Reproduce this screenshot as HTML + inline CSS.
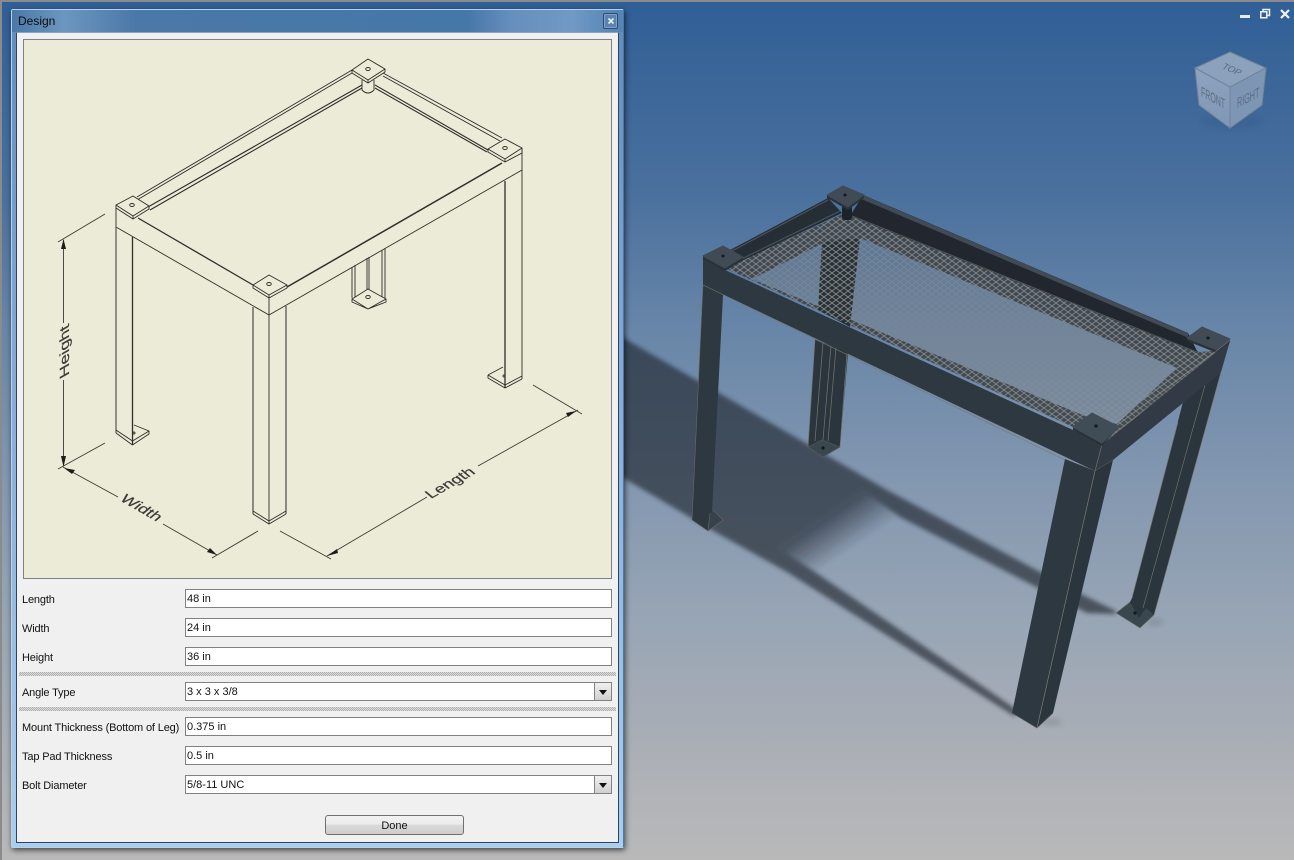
<!DOCTYPE html>
<html><head><meta charset="utf-8"><title>Design</title>
<style>
html,body{margin:0;padding:0;width:1294px;height:860px;overflow:hidden;background:#888}
body{position:relative;font-family:"Liberation Sans",sans-serif}
.abs,svg,.win,.c,.lab,.inp,.hatch,.btn,.dd{position:absolute}
#bg{left:0;top:0;width:1294px;height:860px;background:linear-gradient(180deg,#2f5f97 0,#3a6598 70px,#4b719e 200px,#6886a8 330px,#8397b0 480px,#98a5b5 620px,#a9aeb6 740px,#b9b9b9 860px)}
#edgeT{position:absolute;left:0;top:0;width:1294px;height:2px;background:#8b8b8b}
#edgeL{position:absolute;left:0;top:0;width:2px;height:860px;background:#8b8b8b}
.win{left:11px;top:9px;width:613px;height:839px;box-sizing:border-box;border:1px solid #b9d2ea;border-right-color:#4d78a6;background:linear-gradient(180deg,#5f8cbc 0,#7ea6d2 300px,#a8cef0 839px);box-shadow:1px 2px 6px rgba(0,0,0,.65);border-radius:2px}
.tb{position:absolute;left:0;top:0;right:0;height:22px;background:linear-gradient(90deg,#4a79a8 0,#6b96bf 52px,#4a78a8 125px,#4677a9 455px,#668fbd 500px,#7199c5 560px,#5585b6 605px)}
.ttl{position:absolute;left:6px;top:3px;font-size:12px;color:#0c0c0c;line-height:17px}
.x{position:absolute;left:591px;top:3px;width:13px;height:14px;border:1px solid #2f4a6e;border-radius:2px;background:#5b83b0;box-shadow:inset 0 0 0 1px #7fa3cc}
.c{left:16px;top:32px;width:603px;height:811px;box-sizing:border-box;border:1px solid #34415a;border-top-color:#8da4bd;background:#f0f0f0}
.prev{left:23px;top:39px;width:589px;height:540px;box-sizing:border-box;border:1px solid #7b8090;background:#ecebd7;position:absolute}
.lab{left:22px;font-size:11px;line-height:14px;color:#111;white-space:nowrap;letter-spacing:-.15px}
.inp{left:185px;width:427px;height:19px;box-sizing:border-box;border:1px solid #7f8285;background:#fff;font-size:11px;line-height:19px;padding-left:1px;color:#111;white-space:nowrap}
.hatch{left:19px;width:597px;height:4px;background:repeating-conic-gradient(#b0b0b0 0 25%,#dadada 0 50%) 0 0/2px 2px}
.dd{left:594px;width:18px;height:19px;box-sizing:border-box;border:1px solid #7f8285;background:linear-gradient(180deg,#f0f0f0,#cfcfcf)}
.dd i{position:absolute;left:4px;top:7px;width:0;height:0;border-left:4px solid transparent;border-right:4px solid transparent;border-top:5px solid #111}
.btn{left:325px;top:815px;width:139px;height:20px;box-sizing:border-box;border:1px solid #707070;border-radius:3px;background:linear-gradient(180deg,#f3f3f3 0,#ebebeb 45%,#dadada 50%,#cdcdcd 100%);font-size:11px;line-height:20px;text-align:center;color:#111}
</style></head><body>
<div id="bg" class="abs"></div><div id="edgeT"></div><div id="edgeL"></div>

<svg style="left:0;top:0" width="1294" height="860" viewBox="0 0 1294 860">
<defs>
<filter id="b1" filterUnits="userSpaceOnUse" x="600" y="300" width="600" height="460"><feGaussianBlur stdDeviation="2"/></filter>
<filter id="b2" x="-30%" y="-30%" width="160%" height="160%"><feGaussianBlur stdDeviation="3"/></filter>
<filter id="soft" filterUnits="userSpaceOnUse" x="680" y="170" width="570" height="570"><feGaussianBlur stdDeviation=".35"/></filter>
<linearGradient id="fade" gradientUnits="userSpaceOnUse" x1="820" y1="519" x2="844" y2="554"><stop offset="0" stop-color="#1a2029"/><stop offset=".25" stop-color="#1a2029" stop-opacity=".8"/><stop offset="1" stop-color="#1a2029" stop-opacity="0"/></linearGradient>
<pattern id="mesh" patternUnits="userSpaceOnUse" width="8" height="6">
<path d="M0 3L4 0L8 3L4 6Z" fill="none" stroke="#85837f" stroke-width=".95"/>
</pattern>
<linearGradient id="cube" x1="0" y1="0" x2="0" y2="1"><stop offset="0" stop-color="#8ea4bf"/><stop offset="1" stop-color="#7e97b5"/></linearGradient>
</defs>

<!-- shadow -->
<g filter="url(#b1)" opacity=".62">
<polygon fill="#1a2029" points="620,336 887,490 1085,596 1116,611 1116,614 1087,613 900,517 862,490 778,548 815,572 988,690 1020,712 1014,716 787,572 717,533 620,476"/>
<polygon fill="url(#fade)" points="862,490 900,517 815,572 778,548"/>
</g>
<ellipse cx="1052" cy="722" rx="10" ry="4" fill="#333" opacity=".15" filter="url(#b2)"/>
<ellipse cx="1155" cy="622" rx="8" ry="4" fill="#333" opacity=".15" filter="url(#b2)"/>

<g filter="url(#soft)">
<!-- back leg -->
<polygon points="815,339 848,353 840,447 823,457 808,447" fill="#2c353d"/>
<g stroke="#76766c" stroke-width=".7" fill="none">
<path d="M815,339L808,447M823,343L815,441M831,346L823,440M836,348L828,441M847,353L840,447"/>
</g>
<polygon points="808,447 823,457 840,447 822,440" fill="#3a4650" stroke="#5b5c56" stroke-width=".6"/>
<circle cx="823" cy="448" r="1.600" fill="#15191d"/>

<!-- left leg -->
<polygon points="703,283 723,295 712,512 723,520 708,531 692,520" fill="#2d3740"/>
<polygon points="708,531 723,520 715,511 711,512 708,525" fill="#36424c"/>
<path d="M703,285L692,520L708,531L723,520L714,511M708,531L710,513" fill="none" stroke="#6b6a60" stroke-width=".6"/>

<!-- right leg -->
<polygon points="1183,402 1221,372 1154,615 1140,628 1116,613 1130,602 1132,598" fill="#2c363e"/>
<polygon points="1116,613 1140,628 1154,615 1146,608 1139,618 1130,602" fill="#3a4650"/>
<circle cx="1135" cy="613" r="1.600" fill="#15191d"/>
<path d="M1205,385L1143,608M1178,422L1132,598M1221,372L1154,615L1140,628L1116,613L1130,602" fill="none" stroke="#77766c" stroke-width=".6"/>

<!-- mesh -->
<path fill-rule="evenodd" fill="#3a444f" fill-opacity=".92" d="M725,268L845,213L1200,352L1222,350L1102,445L1073,427ZM752,279L823,243L860,238L1177,368L1117,424L1085,416Z"/>
<polygon points="822,242 860,238 850,327 818,310" fill="#28313a"/>
<path d="M725,268L845,213L1200,352L1222,350L1102,445L1073,427Z" fill="url(#mesh)"/>

<!-- rear rails -->
<polygon points="730,250 828,198 842,213 727,268" fill="#262d34"/>
<path d="M730,252L828,200M727,266L840,211" stroke="#4b545b" stroke-width="1.100" fill="none"/>
<polygon points="863,195 1188,333 1198,353 850,216" fill="#20272d"/>
<path d="M863,197.500L1188,335.500" stroke="#414c55" stroke-width="4" fill="none"/>
<path d="M852,216L1197,352" stroke="#59605f" stroke-width=".8" fill="none"/>
<rect x="842" y="205" width="10" height="15" rx="3" fill="#1d2329"/>

<!-- plates back -->
<polygon points="827,195 843,186 864,195 864,198 848,210 827,198" fill="#2a3239"/>
<polygon points="827,195 843,186 864,195 848,207" fill="#3f4b55" stroke="#3f4b55" stroke-linejoin="round"/>
<circle cx="845" cy="195" r="1.500" fill="#12161a"/>
<polygon points="1187,338 1202,327 1230,339 1230,342 1217,353 1187,341" fill="#2a3239"/>
<polygon points="1187,338 1202,327 1230,339 1217,350" fill="#3f4b55" stroke="#3f4b55" stroke-linejoin="round"/>
<circle cx="1208" cy="338" r="1.500" fill="#12161a"/>

<!-- front rails -->
<polygon points="703,258 725,270 1073,430 1102,445 1095,471 703,285" fill="#2e3841"/>
<polygon points="1102,445 1230,341 1221,372 1113,460 1095,471" fill="#303b45"/>
<path d="M703,285L1063,459L1095,471L1113,460M1102,444L1095,471M1103,443L1230,340" fill="none" stroke="#79786c" stroke-width=".6"/>

<!-- front leg -->
<polygon points="1065,459 1095,471 1037,728 1012,713" fill="#2d3841"/>
<polygon points="1095,471 1113,460 1053,713 1037,728" fill="#2a343d"/>
<path d="M1095,471L1037,728" stroke="#7d7c70" stroke-width=".7"/>
<path d="M1012,713L1037,728L1053,713" stroke="#5e5e56" stroke-width=".7" fill="none"/>

<!-- plates front -->
<polygon points="703,256 723,246 743,257 743,260 725,271 703,259" fill="#2a3239"/>
<polygon points="703,256 723,246 743,257 725,268" fill="#3f4b55" stroke="#3f4b55" stroke-linejoin="round"/>
<circle cx="723" cy="256" r="1.500" fill="#12161a"/>
<polygon points="1073,427 1092,413 1119,427 1102,446 1073,430" fill="#2a3239"/>
<polygon points="1073,427 1092,413 1119,427 1102,443" fill="#414d57" stroke="#414d57" stroke-linejoin="round"/>
<circle cx="1096" cy="426" r="1.600" fill="#12161a"/>
</g>

<!-- view cube -->
<ellipse cx="1232" cy="122" rx="30" ry="8" fill="#2c4d78" opacity=".2" filter="url(#b2)"/>
<polygon points="1230,52 1266,68 1230,87 1195,68" fill="#8ba2bd" stroke="#71849b" stroke-width="1"/>
<polygon points="1195,68 1230,87 1230,128 1199,105" fill="url(#cube)" stroke="#71849b" stroke-width="1"/>
<polygon points="1266,68 1230,87 1230,128 1262,105" fill="#7d96b4" stroke="#71849b" stroke-width="1"/>
<g font-family="'Liberation Sans',sans-serif" font-size="10" fill="#5a6b82">
<text transform="matrix(.88 .38 -.6 .72 1221 68)">TOP</text>
<text transform="matrix(.7 .38 0 1.4 1201 96)">FRONT</text>
<text transform="matrix(.72 -.36 0 1.4 1237 108)">RIGHT</text>
</g>

<!-- window controls -->
<rect x="1240" y="15" width="10" height="3" fill="#e8ecf0"/>
<path d="M1263,11V9.500H1269.500V15.500H1267M1260.800,11.800H1266.800V17.800H1260.800Z" fill="none" stroke="#eef1f4" stroke-width="1.500"/>
<path d="M1281,10L1289,18M1289,10L1281,18" stroke="#f2f4f6" stroke-width="2.200"/>
</svg>

<div class="win"><div class="tb"><div class="ttl">Design</div>
<div class="x"><svg style="left:3px;top:3px" width="8" height="8"><path d="M1.500,1.500L6.500,6.500M6.500,1.500L1.500,6.500" stroke="#e8eef4" stroke-width="1.700"/></svg></div></div></div>
<div class="c"></div>

<div class="prev"></div>
<svg style="left:0;top:0;filter:blur(.3px)" width="640" height="600" viewBox="0 0 640 600">
<g fill="none" stroke="#2e2e2a" stroke-width=".9" stroke-linejoin="round">
<!-- rear rails -->
<path d="M137,197L352,70M137,200L352,73"/>
<path d="M148,207L362,85M150,210L362,88" stroke-width="1.100"/>
<path d="M383,73L502,138M383,76L500,141"/>
<path d="M375,85L488,150M375,88L487,152" stroke-width="1.100"/>
<!-- cylinder -->
<path d="M362,80V90Q368,96 374,90V80"/>
<path d="M138,218L253,285" stroke-width="1.300"/>
<!-- back plate -->
<path d="M352,70L368,59L385,69L368,80ZM352,70V73L368,83L385,72V69M368,80V83" fill="#ecebd7"/>
<ellipse cx="368" cy="69" rx="2.300" ry="1.500"/>
<!-- right plate -->
<path d="M488,149L505,139L522,148L505,159ZM488,149V152L505,162L522,153V148M505,159V162" fill="#ecebd7"/>
<ellipse cx="505" cy="148" rx="2.300" ry="1.500"/>
<!-- left plate -->
<path d="M116,205L133,196L149,206L133,216ZM116,205V208L133,219L149,209V206M133,216V219" fill="#ecebd7"/>
<ellipse cx="132" cy="205" rx="2.300" ry="1.500"/>
<!-- front plate -->
<path d="M253,285L269,275L287,285L269,295ZM253,285V288L269,298L287,288V285M269,295V298" fill="#ecebd7"/>
<ellipse cx="269" cy="284" rx="2.300" ry="1.500"/>
<!-- front frame -->
<path d="M287,287L502,163" stroke-width="1.500"/>
<path d="M522,148V170M116,208V227M269,298V315"/>
<path d="M116,227L269,315L522,170"/>
<!-- back leg -->
<path d="M352,267V298M355,265V300M367,258V290M369,257V290M382,250V298M385,248V299"/>
<path d="M352,299L368,289L386,299L368,309ZM352,299V302L368,309M386,299V302L368,309" fill="#ecebd7"/>
<ellipse cx="368" cy="297" rx="2.300" ry="1.500"/>
<!-- left leg -->
<path d="M116,227V433" stroke="#555" stroke-width="1.200"/>
<path d="M132.500,237V445" stroke-width="1.300"/>
<path d="M116,433L132.500,445L149,434V431L134,425M116,430L132.500,441L149,431"/>
<circle cx="134" cy="433" r="1" />
<!-- front leg -->
<path d="M253,307V514M286,306V514" stroke="#555" stroke-width="1.300"/>
<path d="M269,315V524"/>
<path d="M253,511L269,521L286,511M253,514L269,524L286,514"/>
<!-- right leg -->
<path d="M505,181V388" stroke-width="1.300"/>
<path d="M522,170V379"/>
<path d="M488,375L505,385L522,376M488,375V378L505,388L522,379M488,375L503,367"/>
<circle cx="504" cy="376" r="1"/>
</g>
<!-- dimensions -->
<g fill="none" stroke="#3a3a36" stroke-width=".9">
<path d="M58,242L105,214M58,469L105,443"/>
<path d="M63.500,240V323M63.500,380V465"/>
<path d="M63,467L118,497M163,524L217,555M212,558L258,531"/>
<path d="M280,531L331,559M327,556L427,497M478,466L578,410M533,385L582,414"/>
</g>
<g fill="#1c1c1a">
<path d="M63.500,239L66,249H61Z"/>
<path d="M63.500,467L66,456H61Z"/>
<path d="M64,468L75,470L72,474Z"/>
<path d="M217,555L207,552L210,548Z"/>
<path d="M327,556L337,549L338,553Z"/>
<path d="M576,411L566,413L568,417Z"/>
</g>
<g font-family="'Liberation Sans',sans-serif" font-size="17" fill="#3a3a36" stroke="#3a3a36" stroke-width=".25">
<text transform="matrix(0 -1 .74 -.42 69 375)" font-size="18">Height</text>
<text transform="matrix(.87 .5 -.65 .55 119 500)">Width</text>
<text transform="matrix(.87 -.5 .65 .55 431 499)">Length</text>
</g>
</svg>

<div class="lab" style="top:593px">Length</div><div class="inp" style="top:589px">48 in</div>
<div class="lab" style="top:622px">Width</div><div class="inp" style="top:618px">24 in</div>
<div class="lab" style="top:651px">Height</div><div class="inp" style="top:647px">36 in</div>
<div class="hatch" style="top:672px"></div>
<div class="lab" style="top:686px">Angle Type</div><div class="inp" style="top:682px">3 x 3 x 3/8</div><div class="dd" style="top:682px"><i></i></div>
<div class="hatch" style="top:707px"></div>
<div class="lab" style="top:721px">Mount Thickness (Bottom of Leg)</div><div class="inp" style="top:717px">0.375 in</div>
<div class="lab" style="top:750px">Tap Pad Thickness</div><div class="inp" style="top:746px">0.5 in</div>
<div class="lab" style="top:779px">Bolt Diameter</div><div class="inp" style="top:775px">5/8-11 UNC</div><div class="dd" style="top:775px"><i></i></div>
<div class="btn">Done</div>
</body></html>
